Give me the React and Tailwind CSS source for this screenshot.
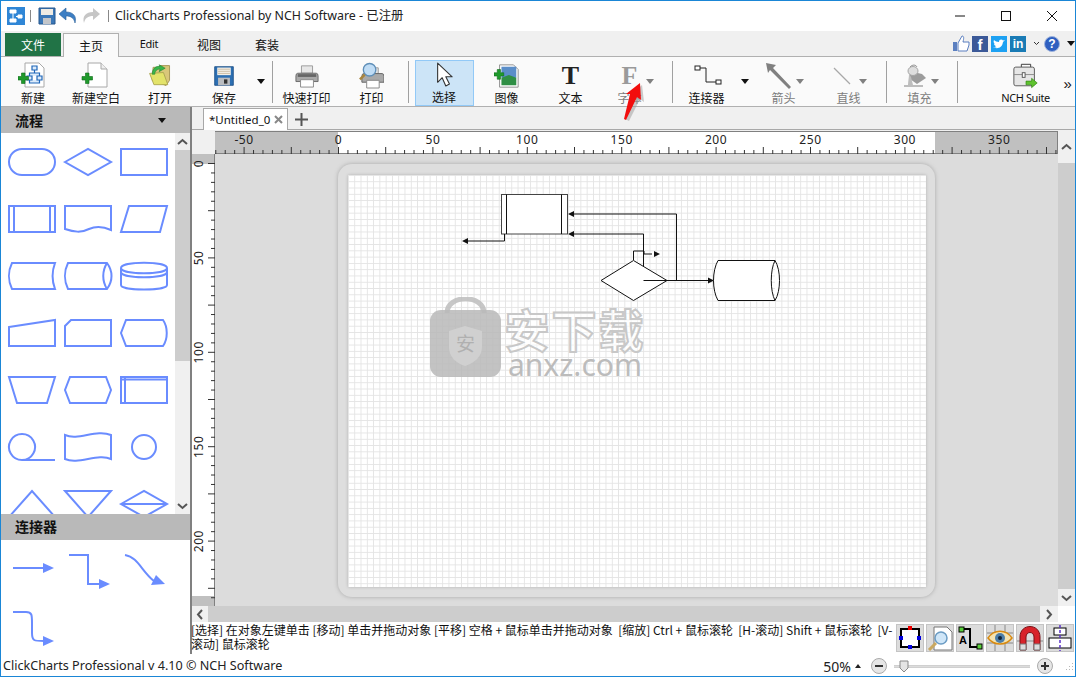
const cjk = '"Noto Sans CJK SC","Noto Sans",sans-serif';

const Caret = ({ gray }) => (
  <svg width="8" height="5" viewBox="0 0 8 5"><path d="M0 0H8L4 5Z" fill={gray ? '#808080' : '#111'} /></svg>
);

const Plus = ({ x = 0, y = 0 }) => (
  <path transform={`translate(${x} ${y})`} d="M3.5 0H7V3.5H10.5V7H7V10.5H3.5V7H0V3.5H3.5Z" fill="#1f9a2c" stroke="#0d6b17" strokeWidth="0.6" />
);

const icons = {
  newChart: (
    <svg width="30" height="30" viewBox="0 0 30 30">
      <path d="M7 2H21L26 7V26H7Z" fill="#fff" stroke="#a8a8a8" />
      <path d="M14 5H19V9H14ZM9 15H14V19H9ZM19 15H24V19H19ZM16.5 9V12M11.5 15V12H21.5V15M11.5 19V22H21.5V19" fill="#dcebfa" stroke="#1f66b8" strokeWidth="1.2" />
      <Plus x={0} y={12} />
    </svg>
  ),
  newBlank: (
    <svg width="30" height="30" viewBox="0 0 30 30">
      <path d="M7 2H20L26 8V26H7Z" fill="#fff" stroke="#a8a8a8" />
      <path d="M20 2V8H26" fill="#eee" stroke="#a8a8a8" />
      <Plus x={1} y={12} />
    </svg>
  ),
  open: (
    <svg width="26" height="26" viewBox="0 0 30 30">
      <path d="M7 5H13L15 3H26V20L22 26L6 20Z" fill="#d9c77a" stroke="#a08f4d" />
      <path d="M3 12L19 11L24 25L8 25Z" fill="#e3e36a" stroke="#a8a24d" />
      <path d="M6 13C6 7 10 3 15 4L14 2L21 6L14 10L15 7C11 7 9 10 9 13Z" fill="#39b54a" stroke="#1c7f2c" strokeWidth="0.6" />
    </svg>
  ),
  save: (
    <svg width="22" height="22" viewBox="0 0 26 26">
      <path d="M2 2H24V24H2Z" fill="#2c6fb3" stroke="#1c4f86" />
      <rect x="5" y="3" width="16" height="9" fill="#f3efe6" />
      <path d="M6 5H20M6 7.5H20M6 10H20" stroke="#c9b9a0" />
      <rect x="6" y="15" width="14" height="9" fill="#b9bcc0" />
      <rect x="13" y="17" width="4" height="5" fill="#333" />
    </svg>
  ),
  print: (
    <svg width="24" height="24" viewBox="0 0 26 26">
      <path d="M7 2H19V10H7Z" fill="#e7e7e7" stroke="#999" />
      <path d="M3 10H23Q25 10 25 13V19H1V13Q1 10 3 10Z" fill="#a9a9a9" stroke="#666" />
      <rect x="3" y="11" width="20" height="3" fill="#666" />
      <path d="M6 17H20V25H6Z" fill="#fff" stroke="#888" />
    </svg>
  ),
  preview: (
    <svg width="25" height="27" viewBox="0 0 26 28">
      <path d="M9 6H20V12H9Z" fill="#e7e7e7" stroke="#999" />
      <path d="M5 12H24Q26 12 26 15V21H3V15Q3 12 5 12Z" fill="#a9a9a9" stroke="#666" />
      <path d="M8 19H21V27H8Z" fill="#fff" stroke="#888" />
      <circle cx="11" cy="8" r="6.5" fill="#bfdcf5" stroke="#5f8fb8" strokeWidth="1.4" />
      <path d="M6 13L1 18" stroke="#a8843d" strokeWidth="2.6" />
    </svg>
  ),
  cursor: (
    <svg width="20" height="26" viewBox="0 0 22 28">
      <path d="M4 1V22L9 17L13 26L17 24L13 16H20Z" fill="#fff" stroke="#333" strokeWidth="1.2" strokeLinejoin="round" />
    </svg>
  ),
  image: (
    <svg width="26" height="26" viewBox="0 0 28 28">
      <path d="M6 2H21L26 7V26H6Z" fill="#fff" stroke="#8a8a8a" />
      <rect x="8" y="4" width="16" height="12" fill="#5b8ec9" />
      <path d="M8 16L16 13L24 16V24H8Z" fill="#2f8f45" />
      <Plus x={0} y={7} />
    </svg>
  ),
  text: <span className="font-['Liberation_Serif',serif] font-bold text-[26px] leading-[28px] text-[#222]">T</span>,
  font: <span className="font-['Liberation_Serif',serif] font-bold text-[26px] leading-[28px] text-[#9a9a9a]">F</span>,
  connector: (
    <svg width="30" height="26" viewBox="0 0 30 26">
      <path d="M8 5H14V19H24" fill="none" stroke="#222" />
      <rect x="3" y="3" width="5" height="4" fill="#fff" stroke="#222" />
      <rect x="24" y="17" width="5" height="4" fill="#fff" stroke="#222" />
    </svg>
  ),
  arrow: (
    <svg width="26" height="26" viewBox="0 0 26 26" className="mr-[9px]">
      <path d="M0 0L10 2L7 5L25 24L23 26L4 7L2 10Z" fill="#808080" />
    </svg>
  ),
  line: (
    <svg width="18" height="18" viewBox="0 0 18 18" className="mr-[14px]">
      <path d="M1 1L17 17" stroke="#a8a8a8" strokeWidth="1.2" />
    </svg>
  ),
  fill: (
    <svg width="24" height="25" viewBox="0 0 24 25" className="mr-[10px]">
      <path d="M7 4C10 1 13 2 14 4" fill="none" stroke="#8a8a8a" />
      <path d="M6 8L19 11L23 15L14 21L7 16Z" fill="#9c9c9c" />
      <ellipse cx="10" cy="8" rx="5" ry="4.5" fill="#dedede" stroke="#a5a5a5" />
      <path d="M6 11C6 15 5 18 5 22H1V24H20V22H10L8 14Z" fill="#bdbdbd" />
    </svg>
  ),
  suite: (
    <svg width="28" height="27" viewBox="0 0 30 28">
      <path d="M10 5V2H20V5" fill="none" stroke="#333" />
      <rect x="2" y="5" width="22" height="20" rx="2" fill="#e6e6e6" stroke="#555" />
      <path d="M2 13H24" stroke="#888" />
      <rect x="11" y="11" width="3" height="5" fill="#fff" stroke="#555" />
      <path d="M15 20H21V17L27 22L21 27V24H15Z" fill="#5fc32e" stroke="#2f8412" strokeWidth="0.7" />
    </svg>
  ),
};

const Tool = ({ w, icon, label, gray, caret, ml, cls = '', latin, active }) => (
  <div
    className={`relative flex flex-col items-center shrink-0 ${cls}`}
    style={{ width: w, marginLeft: ml || 0 }}
  >
    <div className={`h-[29px] flex items-center justify-center ${active ? '' : 'mt-[4px]'}`}>{icon}</div>
    <div className={`leading-[16px] whitespace-nowrap ${gray ? 'text-[#7d7d7d]' : 'text-[#111]'} ${latin ? "font-['Noto_Sans',sans-serif] text-[11px] tracking-[-0.4px]" : 'text-[12px]'}`}>{label}</div>
    {caret !== undefined && (
      <div className="absolute top-[22px] flex" style={{ left: caret }}><Caret gray={gray} /></div>
    )}
  </div>
);

const Sep = ({ ml }) => <div className="w-px h-[42px] bg-[#a0a0a0] mt-[4px] shrink-0" style={{ marginLeft: ml }} />;

const blue = { fill: 'none', stroke: '#6a8cff', strokeWidth: 2 };

const shapes = [
  <rect x="1" y="1" width="46" height="26" rx="13" {...blue} />,
  <path d="M1 14L24 1L47 14L24 27Z" {...blue} />,
  <rect x="1" y="1" width="46" height="26" {...blue} />,
  <path d="M1 1H47V27H1ZM6 1V27M42 1V27" {...blue} />,
  <path d="M1 1H47V25C38 21 32 21 25 24C17 28 10 27 1 24Z" {...blue} />,
  <path d="M9 1H47L40 27H1Z" {...blue} />,
  <path d="M4 1H47C44 9 44 19 47 27H4C0 19 0 9 4 1Z" {...blue} />,
  <path d="M4 1H43C49 9 49 19 43 27H4C0 19 0 9 4 1ZM43 1C38 9 38 19 43 27" {...blue} />,
  <path d="M1 6C1 -1 47 -1 47 6C47 13 1 13 1 6ZM1 6V23C1 29 47 29 47 23V6M1 10C1 17 47 17 47 10" {...blue} />,
  <path d="M1 8L47 1V27H1Z" {...blue} />,
  <path d="M7 1H47V27H1V7Z" {...blue} />,
  <path d="M6 1H43C48 8 48 20 43 27H6L1 14Z" {...blue} />,
  <path d="M1 1H47L39 27H9Z" {...blue} />,
  <path d="M6 1H42L47 14L42 27H6L1 14Z" {...blue} />,
  <path d="M1 1H47V27H1ZM1 3.5H47M5 1V27" {...blue} />,
  <path d="M14 27A13 13 0 1 1 14.01 27H47" {...blue} />,
  <path d="M1 2C14 8 32 -4 47 2V26C34 20 14 32 1 26Z" {...blue} />,
  <circle cx="24" cy="14" r="12" {...blue} />,
  <path d="M1 27L24 1L47 27Z" {...blue} />,
  <path d="M1 1H47L24 27Z" {...blue} />,
  <path d="M1 14L24 1L47 14L24 27ZM1 14H47" {...blue} />,
];

const ArrowHead = ({ x, y }) => <path d={`M${x - 11} ${y - 5}L${x} ${y}L${x - 11} ${y + 5}Z`} fill="#6a8cff" />;

const Chevron = ({ dir }) => {
  const d = { up: 'M1 6L5.5 2L10 6', down: 'M1 2L5.5 6L10 2', left: 'M6 1L2 5.5L6 10', right: 'M2 1L6 5.5L2 10' }[dir];
  const vertical = dir === 'up' || dir === 'down';
  return (
    <svg width={vertical ? 11 : 8} height={vertical ? 8 : 11} viewBox={vertical ? '0 0 11 8' : '0 0 8 11'}>
      <path d={d} fill="none" stroke="#555" strokeWidth="2" />
    </svg>
  );
};

const ScrollV = ({ cls, thumb, head, tail }) => (
  <div className={`flex flex-col bg-[#f0f0f0] shrink-0 ${cls}`}>
    <div className="flex items-center justify-center shrink-0" style={{ height: head }}><Chevron dir="up" /></div>
    <div className="bg-[#cdcdcd] shrink-0" style={{ height: thumb }} />
    <div className="flex-1" />
    <div className="flex items-center justify-center shrink-0" style={{ height: tail }}><Chevron dir="down" /></div>
  </div>
);

const HRuler = () => {
  const ticks = [];
  for (let i = -13; i <= 76; i++) {
    const x = 123.5 + i * 9.44;
    const major = i % 5 === 0;
    ticks.push(<path key={i} d={`M${x} ${major ? 15 : 18}V22`} stroke="#333" strokeWidth="1" />);
  }
  const labels = [-50, 0, 50, 100, 150, 200, 250, 300, 350];
  return (
    <svg width="842" height="22" viewBox="0 0 842 22" className="block">
      {ticks}
      {labels.map((n) => (
        <text key={n} x={123.5 + n * 1.888} y="12" textAnchor="middle" fontSize="12" letterSpacing="0.6" fontFamily="Noto Sans,sans-serif" fill="#222">{n}</text>
      ))}
    </svg>
  );
};

const VRuler = () => {
  const ticks = [];
  for (let i = 0; i <= 47; i++) {
    const y = 9.5 + i * 9.44;
    const major = i % 5 === 0;
    ticks.push(<path key={i} d={`M${major ? 16 : 19} ${y}H23`} stroke="#333" strokeWidth="1" />);
  }
  return (
    <svg width="23" height="452" viewBox="0 0 23 452" className="block">
      {ticks}
      {[0, 50, 100, 150, 200].map((n) => {
        const y = 9.5 + n * 1.888;
        return (
          <text key={n} transform={`translate(11 ${y}) rotate(-90)`} textAnchor="middle" fontSize="12" letterSpacing="0.6" fontFamily="Noto Sans,sans-serif" fill="#222">{n}</text>
        );
      })}
    </svg>
  );
};

const Diagram = () => (
  <svg width="578" height="412" viewBox="348 175 578 412" className="absolute inset-0">
    <g fill="none" stroke="#111" strokeWidth="1">
      <rect x="501.5" y="194.5" width="66" height="39.5" fill="#fff" stroke="#444" />
      <path d="M506.5 194.5V234M561.5 194.5V234" />
      <path d="M504.5 234V241H466" />
      <path d="M676.5 280V214H572" />
      <path d="M643.5 280V234H572" />
      <path d="M633.5 260V251H644V254H652" />
      <path d="M601 280.5L633.5 260.5L667 280.5L633.5 300.5Z" fill="#fff" />
      <path d="M643.5 280.5H708" />
      <path d="M718 260.5H775C781 270 781 291 775 300.5H718C712 290 712 271 718 260.5ZM775 260.5C770 270 770 291 775 300.5" fill="#fff" />
    </g>
    <path d="M462 241L468 238V244Z M568 214L574 211V217Z M568 234L574 231V237Z M660 254L654 251V257Z M714 280.5L708 277.5V283.5Z" fill="#111" />
  </svg>
);

const Watermark = () => (
  <div className="absolute left-[82px] top-[122px] flex items-start gap-[4px] pointer-events-none">
    <svg width="71" height="81" viewBox="0 0 71 81">
      <path d="M17 16C17 -3 54 -3 54 16" fill="none" stroke="#bdbdbd" strokeWidth="5" opacity="0.85" />
      <rect x="0" y="13" width="71" height="67" rx="11" fill="#b9b9b9" opacity="0.85" />
      <path d="M35 29L52 34V50C52 60 44 66 35 69C26 66 19 60 19 50V34Z" fill="#d2d2d2" opacity="0.85" />
      <text x="35.5" y="54" textAnchor="middle" fontSize="19" fill="#b0b0b0" fontFamily={cjk}>安</text>
    </svg>
    <div className="flex flex-col items-center w-[140px]">
      <div className="font-['Noto_Sans_CJK_SC',sans-serif] font-bold text-[45px] leading-[46px] tracking-[2px] mt-[9px] text-[#ffffff99] [-webkit-text-stroke:2px_#c8c8c8] whitespace-nowrap">安下载</div>
      <div className="font-['Noto_Sans',sans-serif] text-[30px] leading-[26px] text-[#bcbcbc] whitespace-nowrap">anxz.com</div>
    </div>
  </div>
);

const Btn = ({ children }) => (
  <div className="w-[28px] h-[28px] bg-[#dcdcdc] border border-[#c4c4c4] flex items-center justify-center shrink-0">{children}</div>
);

export default function App() {
  return (
    <div className="relative w-[1076px] h-[677px] overflow-hidden border border-[#1a86d6] bg-white flex flex-col text-[#111]" style={{ fontFamily: cjk }}>
      {/* Title bar */}
      <div className="h-[30px] flex items-center shrink-0 bg-white">
        <svg width="18" height="18" viewBox="0 0 18 18" className="ml-[6px]">
          <rect width="18" height="18" fill="#2f86d6" />
          <path d="M3 3H9V6H3ZM11 8H15V11H11ZM3 12H9V15H3ZM6 6V12M9 9.5H11" fill="#fff" stroke="#fff" />
        </svg>
        <div className="w-px h-[12px] bg-[#888] ml-[5px]" />
        <svg width="18" height="18" viewBox="0 0 18 18" className="ml-[7px]">
          <path d="M1 1H17V17H1Z" fill="#3b78b8" stroke="#26568c" />
          <rect x="3" y="2" width="12" height="6" fill="#f0ece4" />
          <rect x="5" y="11" width="8" height="6" fill="#c3c6ca" />
        </svg>
        <svg width="20" height="18" viewBox="0 0 20 18" className="ml-[2px]">
          <path d="M8 1L1 7L8 13V9C13 9 16 11 17 16C19 9 15 5 8 5Z" fill="#3d7fc4" stroke="#2a6099" strokeWidth="0.6" />
        </svg>
        <svg width="20" height="18" viewBox="0 0 20 18" className="ml-[3px]">
          <path d="M12 1L19 7L12 13V9C7 9 4 11 3 16C1 9 5 5 12 5Z" fill="#c6c6c6" />
        </svg>
        <div className="w-px h-[12px] bg-[#888] ml-[7px]" />
        <div className="ml-[6px] text-[12.4px] text-[#222] whitespace-nowrap"><span className="font-['Noto_Sans',sans-serif]">ClickCharts Professional by NCH Software - </span>已注册</div>
        <div className="flex-1" />
        <svg width="12" height="2" viewBox="0 0 12 2"><path d="M0 1H10" stroke="#111" /></svg>
        <svg width="12" height="12" viewBox="0 0 12 12" className="ml-[33px]"><rect x="1.5" y="1.5" width="9" height="9" fill="none" stroke="#111" /></svg>
        <svg width="12" height="12" viewBox="0 0 12 12" className="ml-[34px] mr-[17px]"><path d="M1 1L11 11M11 1L1 11" stroke="#111" /></svg>
      </div>

      {/* Menu tabs */}
      <div className="h-[26px] shrink-0 bg-[#f0f0f0] border-b border-[#b0b0b0] flex items-end text-[12px]">
        <div className="ml-[4px] w-[56px] h-[23px] bg-[#217346] text-white flex items-center justify-center">文件</div>
        <div className="ml-[2px] w-[56px] h-[24px] -mb-px bg-[#fafafa] border border-b-0 border-[#b0b0b0] flex items-center justify-center">主页</div>
        <div className="w-[60px] h-[23px] flex items-center justify-center font-['Noto_Sans',sans-serif] text-[11px] tracking-[-0.3px]">Edit</div>
        <div className="w-[60px] h-[23px] flex items-center justify-center">视图</div>
        <div className="w-[56px] h-[23px] flex items-center justify-center">套装</div>
        <div className="flex-1" />
        <div className="flex items-center h-[25px]">
          <svg width="17" height="17" viewBox="0 0 17 17">
            <rect x="0" y="7" width="4" height="9" fill="#5b7fc0" />
            <path d="M5 8L9 1C11 1 11 3 10 7H16V10L14 16H5Z" fill="#fff" stroke="#5b7fc0" />
          </svg>
          <div className="ml-[2px] w-[16px] h-[16px] bg-[#3b5998] text-white font-['Liberation_Sans',sans-serif] font-bold text-[15px] leading-[17px] text-center">f</div>
          <div className="ml-[3px] w-[16px] h-[16px] bg-[#1da1f2] flex items-center justify-center">
            <svg width="12" height="10" viewBox="0 0 12 10"><path d="M0 8C3 10 9 10 10 3L12 1L10 1.5C9 0 6 0 6 3C4 3 2 2 1 1C0 3 1 4 2 5L1 4.6C1 6 2 7 3 7L2 7.2C3 8 3 8 4 8C3 8.5 1 8.5 0 8Z" fill="#fff" /></svg>
          </div>
          <div className="ml-[3px] w-[16px] h-[16px] bg-[#1a7bb5] text-white font-['Liberation_Sans',sans-serif] font-bold text-[12px] leading-[16px] text-center">in</div>
          <svg width="7" height="5" viewBox="0 0 7 5" className="ml-[7px]"><path d="M1 1L3.5 3.5L6 1" fill="none" stroke="#333" /></svg>
          <div className="ml-[4px] w-[16px] h-[16px] rounded-full bg-[#2f5fc0] border border-[#9fb4dc] text-white font-['Liberation_Sans',sans-serif] font-bold text-[12px] leading-[14px] text-center">?</div>
          <div className="ml-[7px] flex"><Caret /></div>
        </div>
      </div>

      {/* Toolbar */}
      <div className="h-[50px] shrink-0 bg-[#fafafa] border-b border-[#b0b0b0] flex items-stretch">
        <Tool w={64} icon={icons.newChart} label="新建" />
        <Tool w={62} icon={icons.newBlank} label="新建空白" />
        <Tool w={66} icon={icons.open} label="打开" />
        <Tool w={62} icon={icons.save} label="保存" />
        <div className="w-[12px] flex justify-center pt-[22px]"><div><Caret /></div></div>
        <Sep ml={5} />
        <Tool w={68} icon={icons.print} label="快速打印" />
        <Tool w={62} icon={icons.preview} label="打印" />
        <Sep ml={5} />
        <Tool w={59} ml={6} icon={icons.cursor} label="选择" active cls="bg-[#cce4f7] border border-[#92c9f7] h-[46px] mt-[3px]" />
        <Tool w={66} icon={icons.image} label="图像" />
        <Tool w={62} icon={icons.text} label="文本" />
        <Tool w={56} icon={icons.font} label="字体" gray caret={44} />
        <Sep ml={14} />
        <Tool w={68} icon={icons.connector} label="连接器" />
        <div className="w-[8px] flex justify-center pt-[22px]"><div><Caret /></div></div>
        <Tool w={70} icon={icons.arrow} label="箭头" gray caret={47} />
        <Tool w={60} icon={icons.line} label="直线" gray caret={40} />
        <Sep ml={7} />
        <Tool w={66} icon={icons.fill} label="填充" gray caret={44} />
        <Sep ml={4} />
        <Tool w={76} ml={30} icon={icons.suite} label="NCH Suite" latin />
        <div className="w-[12px] text-[15px] leading-[15px] pt-[19px] font-['Liberation_Sans',sans-serif]">»</div>
      </div>

      {/* Middle */}
      <div className="flex-1 min-h-0 flex">
        {/* Sidebar */}
        <div className="w-[189px] shrink-0 flex flex-col">
          <div className="h-[26px] shrink-0 bg-[#b9b9b9] flex items-center pl-[14px] pr-[24px] justify-between">
            <span className="font-bold text-[14px] leading-[20px]">流程</span>
            <Caret />
          </div>
          <div className="h-[381px] shrink-0 flex overflow-hidden">
            <div className="flex-1 overflow-hidden pl-[7px] pt-[15px]">
              <div className="grid grid-cols-[repeat(3,56px)] auto-rows-[57px]">
                {shapes.map((s, i) => (
                  <svg key={i} width="48" height="28" viewBox="0 0 48 28" className="overflow-visible">{s}</svg>
                ))}
              </div>
            </div>
            <ScrollV cls="w-[15px]" thumb={211} head={17} tail={17} />
          </div>
          <div className="h-[26px] shrink-0 bg-[#b9b9b9] flex items-center pl-[14px] pb-[2px]">
            <span className="font-bold text-[14px] leading-[20px]">连接器</span>
          </div>
          <div className="flex-1 pl-[11px] pt-[14px] grid grid-cols-[repeat(3,56px)] auto-rows-[57px]">
            <svg width="44" height="36" viewBox="0 0 44 36"><path d="M1 14H32" fill="none" stroke="#6a8cff" strokeWidth="2" /><ArrowHead x={42} y={14} /></svg>
            <svg width="44" height="36" viewBox="0 0 44 36"><path d="M1 1H20V30H32" fill="none" stroke="#6a8cff" strokeWidth="2" /><ArrowHead x={42} y={30} /></svg>
            <svg width="44" height="36" viewBox="0 0 44 36"><path d="M1 1C14 3 18 18 30 27" fill="none" stroke="#6a8cff" strokeWidth="2" /><path d="M41 30L27 31L32 21Z" fill="#6a8cff" /></svg>
            <svg width="44" height="36" viewBox="0 0 44 36"><path d="M1 1H14C20 1 20 4 20 12V22C20 30 22 30 32 30" fill="none" stroke="#6a8cff" strokeWidth="2" /><ArrowHead x={42} y={30} /></svg>
          </div>
        </div>

        {/* Document area */}
        <div className="flex-1 min-w-0 flex flex-col border-l-2 border-[#808080]">
          <div className="h-[23px] shrink-0 bg-[#f0f0f0] border-b border-[#a8a8a8] flex items-end">
            <div className="ml-[11px] w-[85px] h-[22px] -mb-px bg-white border border-b-0 border-[#a8a8a8] flex items-center pl-[5px] text-[11.5px] font-['Noto_Sans',sans-serif] whitespace-nowrap">
              *Untitled_0
              <svg width="9" height="9" viewBox="0 0 9 9" className="ml-[4px]"><path d="M1 1L8 8M8 1L1 8" stroke="#888" strokeWidth="2" /></svg>
            </div>
            <svg width="13" height="13" viewBox="0 0 13 13" className="ml-[7px] mb-[3px]"><path d="M6.5 0V13M0 6.5H13" stroke="#555" strokeWidth="2" /></svg>
          </div>
          <div className="flex-1 min-h-0 flex flex-col">
            <div className="flex h-[476px] shrink-0">
              <div className="flex-1 min-w-0 flex flex-col">
                <div className="h-px bg-[#f0f0f0]" />
                <div className="h-[23px] shrink-0 flex bg-[#f0f0f0]">
                  <div className="w-[23px] shrink-0" />
                  <div className="flex-1 relative border-y border-r border-[#808080] flex bg-[#c0c0c0]">
                    <div className="w-[123px] shrink-0" />
                    <div className="w-[597px] shrink-0 bg-white" />
                    <div className="absolute left-0 top-0"><HRuler /></div>
                  </div>
                </div>
                <div className="flex-1 min-h-0 flex">
                  <div className="w-[23px] shrink-0 relative bg-white border-r border-[#808080] flex flex-col">
                    <div className="h-[10px] bg-[#c0c0c0]" />
                    <div className="h-[432px] bg-white" />
                    <div className="flex-1 bg-[#c0c0c0]" />
                    <div className="absolute left-0 top-0"><VRuler /></div>
                  </div>
                  <div className="flex-1 min-w-0 bg-[#dcdcdc] pl-[123px] pt-[10px] overflow-hidden">
                    <div className="w-[597px] h-[433px] rounded-[14px] bg-[#dedede] shadow-[0_0_4px_#a8a8a8] pl-[10px] pt-[11px]">
                      <div className="relative w-[578px] h-[412px] bg-white bg-[linear-gradient(#e4e4e4_1px,transparent_1px),linear-gradient(90deg,#e4e4e4_1px,transparent_1px)] bg-[size:6.29px_6.29px] shadow-[0_0_3px_#b4b4b4]">
                        <Diagram />
                        <Watermark />
                      </div>
                    </div>
                  </div>
                </div>
              </div>
              <ScrollV cls="w-[17px]" thumb={426} head={33} tail={17} />
            </div>
            <div className="h-[16px] shrink-0 flex bg-[#f0f0f0]">
              <div className="w-[16px] flex items-center justify-center"><Chevron dir="left" /></div>
              <div className="w-[832px] bg-[#cdcdcd]" />
              <div className="w-[18px] flex items-center justify-center"><Chevron dir="right" /></div>
              <div className="flex-1 bg-white" />
            </div>
            <div className="flex-1 min-h-0 flex bg-white">
              <div className="w-[704px] shrink-0 text-[12px] leading-[14px] pt-[1px] -ml-px whitespace-nowrap overflow-hidden text-[#111]">
                [选择] 在对象左键单击 [移动] 单击并拖动对象 [平移] 空格 + 鼠标单击并拖动对象 &nbsp;[缩放] Ctrl + 鼠标滚轮 &nbsp;[H-滚动] Shift + 鼠标滚轮 &nbsp;[V-<br />滚动] 鼠标滚轮
              </div>
              <div className="flex gap-[2px] pt-[2px] ml-px">
                <Btn>
                  <svg width="24" height="24" viewBox="0 0 24 24"><rect x="3" y="3" width="18" height="18" fill="#fff" stroke="#000" strokeWidth="2" /><rect x="10" y="0" width="4" height="4" fill="#e00" /><rect x="1" y="10" width="4" height="4" fill="#00d" /><rect x="19" y="10" width="4" height="4" fill="#00d" /><rect x="10" y="19" width="4" height="4" fill="#00d" /></svg>
                </Btn>
                <Btn>
                  <svg width="26" height="26" viewBox="0 0 26 26"><path d="M7 2H20L25 7V25H7Z" fill="#fff" stroke="#777" /><circle cx="14" cy="13" r="6" fill="#cfe6f8" stroke="#6b9cc4" strokeWidth="1.5" /><path d="M9 18L2 25" stroke="#c9a860" strokeWidth="3" /></svg>
                </Btn>
                <Btn>
                  <svg width="26" height="26" viewBox="0 0 26 26"><path d="M6 4H13V22H21" fill="none" stroke="#000" strokeWidth="2" /><rect x="2" y="2" width="5" height="5" fill="#5bd03c" stroke="#000" /><rect x="20" y="19" width="5" height="5" fill="#5bd03c" stroke="#000" /><text x="6" y="19" fontSize="11" fontWeight="bold" textAnchor="middle" fontFamily="Liberation Sans,sans-serif">A</text></svg>
                </Btn>
                <Btn>
                  <svg width="26" height="26" viewBox="0 0 26 26"><path d="M0 8H26M0 18H26M8 0V26M18 0V26" stroke="#888" /><path d="M1 13C7 4 19 4 25 13C19 21 7 21 1 13Z" fill="#f4e3b0" stroke="#d88a10" strokeWidth="1.5" /><circle cx="13" cy="13" r="5" fill="#4c7ea8" /><circle cx="13" cy="13" r="2" fill="#123" /></svg>
                </Btn>
                <Btn>
                  <svg width="26" height="26" viewBox="0 0 26 26"><path d="M0 16H26" stroke="#888" /><path d="M3 25V12C3 -2 23 -2 23 12V25H17V12C17 6 9 6 9 12V25Z" fill="#d8232a" stroke="#7a1216" /><path d="M3 19H9V25H3ZM17 19H23V25H17Z" fill="#ddd" stroke="#777" /></svg>
                </Btn>
                <Btn>
                  <svg width="26" height="26" viewBox="0 0 26 26"><rect x="7" y="3" width="12" height="7" fill="#fff" stroke="#000" /><rect x="2" y="13" width="22" height="10" fill="#fff" stroke="#000" /><path d="M13 0V26" stroke="#5a32c8" strokeWidth="1.5" strokeDasharray="3 2" /></svg>
                </Btn>
              </div>
            </div>
          </div>
        </div>
      </div>

      {/* Status bar */}
      <div className="h-[22px] shrink-0 flex items-center bg-white pt-[2px]">
        <div className="ml-[2px] text-[12.6px] text-[#222] font-['Noto_Sans',sans-serif] whitespace-nowrap">ClickCharts Professional v 4.10 © NCH Software</div>
        <div className="flex-1" />
        <div className="text-[14px] text-[#222] font-['Noto_Sans',sans-serif]">50%</div>
        <svg width="6" height="4" viewBox="0 0 6 4" className="ml-[4px]"><path d="M0 4H6L3 0Z" fill="#222" /></svg>
        <svg width="16" height="16" viewBox="0 0 16 16" className="ml-[10px]"><circle cx="8" cy="8" r="7.5" fill="#e6e6e6" stroke="#aaa" /><path d="M4 8H12" stroke="#333" strokeWidth="2" /></svg>
        <div className="relative ml-[7px] w-[136px] h-[3px] bg-[#dcdcdc] border-y border-[#d0d0d0]">
          <svg width="10" height="13" viewBox="0 0 10 13" className="absolute left-[5px] -top-[6px]"><path d="M1 1H9V8L5 12L1 8Z" fill="#e4e4e4" stroke="#888" /></svg>
        </div>
        <svg width="16" height="16" viewBox="0 0 16 16" className="ml-[7px]"><circle cx="8" cy="8" r="7.5" fill="#e6e6e6" stroke="#aaa" /><path d="M4 8H12M8 4V12" stroke="#333" strokeWidth="2" /></svg>
        <svg width="10" height="10" viewBox="0 0 10 10" className="ml-[11px] mr-[1px]"><path d="M8 2H9V3H8ZM5 5H6V6H5ZM8 5H9V6H8ZM2 8H3V9H2ZM5 8H6V9H5ZM8 8H9V9H8Z" fill="#b8b8b8" /></svg>
      </div>

      {/* Red annotation arrow */}
      <svg width="24" height="44" viewBox="0 0 24 44" className="absolute left-[621px] top-[81px] pointer-events-none">
        <path d="M20 3L22 20L18 17L7 39L3 37L11 14L7 15Z" fill="#999" opacity="0.5" />
        <path d="M18 1L19 18L15 15L4 38L2 37L8 12L4 12Z" fill="#f20d0d" />
      </svg>
    </div>
  );
}
